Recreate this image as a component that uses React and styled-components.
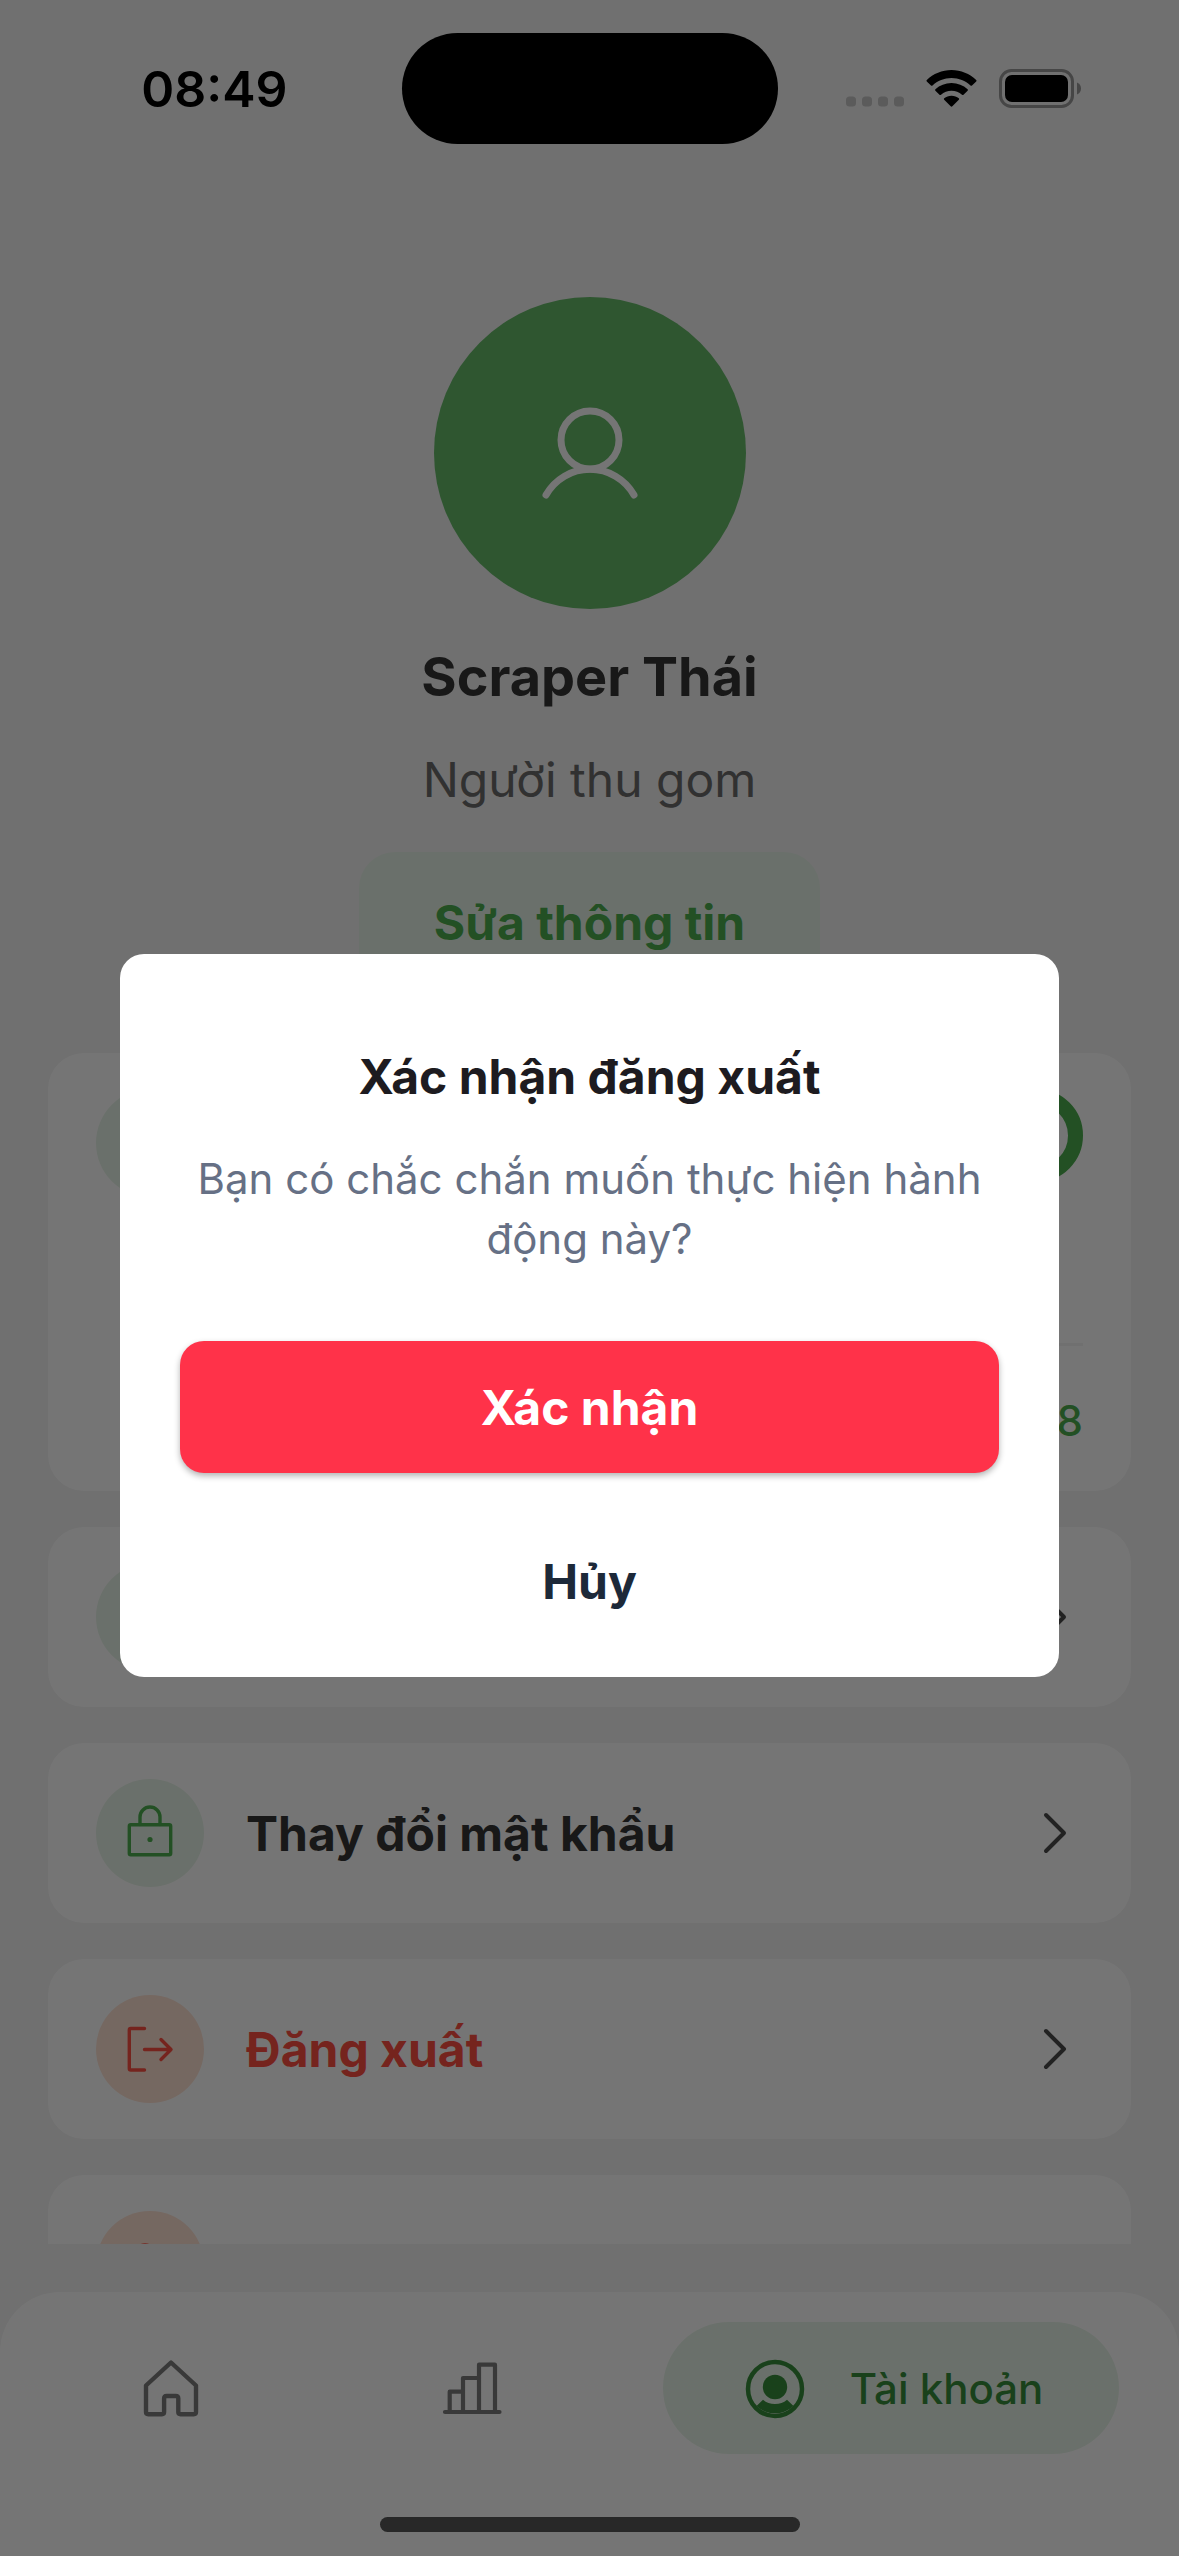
import React from "react";
import styled, { createGlobalStyle } from "styled-components";

const GlobalStyle = createGlobalStyle`
  *, *::before, *::after { box-sizing: border-box; }
  body {
    margin: 0;
    background: #f4f4f4;
    font-family: Inter, "Noto Sans", sans-serif;
    font-optical-sizing: none;
    font-variation-settings: "opsz" 14;
  }
  h1, h2, p { margin: 0; }
  button { font: inherit; font-variation-settings: inherit; border: 0; padding: 0; background: none; cursor: pointer; }
  a { color: inherit; text-decoration: none; }
  svg { display: block; flex: none; }
`;

const Screen = styled.div`
  position: relative;
  display: flex;
  flex-direction: column;
  height: 100vh;
  overflow: hidden;
  background: #f4f4f4;
`;

const StatusBar = styled.header`
  display: grid;
  grid-template-columns: 1fr 376px 1fr;
  align-items: center;
  flex: none;
  height: 177px;
`;

const Clock = styled.time`
  justify-self: end;
  padding-right: 114px;
  font-size: 50px;
  font-weight: 600;
  line-height: 60px;
  color: #000;
`;

const Island = styled.div`
  height: 111px;
  border-radius: 56px;
  background: #000;
`;

const StatusIcons = styled.div`
  display: flex;
  justify-content: flex-end;
  align-items: center;
  gap: 22px;
  padding-right: 98px;
`;

const Content = styled.main`
  display: flex;
  flex-direction: column;
  flex: 1;
  min-height: 0;
  overflow: hidden;
  padding: 120px 48px 0;
`;

const Profile = styled.section`
  display: flex;
  flex-direction: column;
  align-items: center;
  gap: 42px;
  flex: none;
  margin-bottom: 60px;
`;

const Identity = styled.div`
  display: flex;
  flex-direction: column;
  align-items: center;
  gap: 36px;
`;

const Avatar = styled.div`
  display: grid;
  place-items: center;
  width: 312px;
  height: 312px;
  border-radius: 50%;
  background: #66bb6a;
`;

const Name = styled.h1`
  font-size: 54px;
  font-weight: 700;
  line-height: 63px;
  color: #363636;
`;

const Role = styled.p`
  font-size: 48px;
  line-height: 60px;
  color: #6b6b6b;
`;

const EditButton = styled.button`
  height: 141px;
  padding: 0 75px;
  border-radius: 36px;
  background: #e8f5e9;
  color: #4caf50;
  font-size: 48px;
  font-weight: 700;
`;

const Cards = styled.div`
  display: flex;
  flex-direction: column;
  gap: 36px;
  flex: none;
`;

const Card = styled.section`
  display: flex;
  flex-direction: column;
  height: 438px;
  padding: 36px 48px 0;
  border-radius: 36px;
  background: #fff;
`;

const CardTop = styled.div`
  display: flex;
  justify-content: space-between;
  align-items: flex-start;
  flex: 1;
`;

const CardFooter = styled.div`
  display: flex;
  justify-content: flex-end;
  align-items: center;
  height: 148px;
  margin-left: 150px;
  padding-top: 3px;
  border-top: 3px solid #f4f4f4;
  color: #4caf50;
  font-size: 42px;
  font-weight: 500;
`;

const Ring = styled.div`
  width: 93px;
  height: 93px;
  border: 15px solid #4caf50;
  border-radius: 50%;
`;

const Row = styled.button`
  display: flex;
  align-items: center;
  gap: 42px;
  width: 100%;
  height: 180px;
  padding: 0 48px;
  border-radius: 36px;
  background: #fff;
  text-align: left;
`;

const Bubble = styled.span`
  display: grid;
  place-items: center;
  flex: none;
  width: 108px;
  height: 108px;
  border-radius: 50%;
  background: ${(p) => (p.$danger ? "#ffe2d3" : "#e8f5e9")};
  color: ${(p) => (p.$danger ? "#ff4f42" : "#4caf50")};
`;

const RowLabel = styled.span`
  flex: 1;
  font-size: 48px;
  font-weight: 700;
  color: ${(p) => (p.$danger ? "#ff4f42" : "#363636")};
`;

const NavBar = styled.nav`
  display: flex;
  flex-direction: column;
  align-items: center;
  justify-content: space-between;
  flex: none;
  height: 264px;
  margin-top: 48px;
  padding: 30px 60px 24px;
  border-radius: 60px 60px 0 0;
  background: #fff;
`;

const Tabs = styled.div`
  display: flex;
  justify-content: space-between;
  width: 100%;
`;

const Tab = styled.a`
  display: flex;
  align-items: center;
  justify-content: center;
  gap: 39px;
  width: ${(p) => (p.$active ? "456px" : "222px")};
  height: 132px;
  border-radius: 66px;
  background: ${(p) => (p.$active ? "#e8f5e9" : "transparent")};
  && { color: ${(p) => (p.$active ? "#388e3c" : "#7d7d7d")}; }
  font-size: 42px;
  font-weight: 500;
`;

const HomeIndicator = styled.div`
  width: 420px;
  height: 15px;
  border-radius: 8px;
  background: #575757;
`;

const Overlay = styled.div`
  position: absolute;
  inset: 0;
  display: flex;
  align-items: center;
  justify-content: center;
  padding: 177px 120px 102px;
  background: rgba(0, 0, 0, 0.54);
`;

const Dialog = styled.div`
  display: flex;
  flex-direction: column;
  width: 100%;
  padding: 87px 60px 30px;
  border-radius: 24px;
  background: #fff;
  text-align: center;
`;

const DialogTitle = styled.h2`
  margin-bottom: 36px;
  font-size: 48px;
  font-weight: 700;
  line-height: 72px;
  color: #1d1b20;
`;

const DialogText = styled.p`
  margin-bottom: 72px;
  font-size: 42px;
  line-height: 60px;
  color: #667085;
`;

const Actions = styled.div`
  display: flex;
  flex-direction: column;
  gap: 42px;
`;

const ActionButton = styled.button`
  height: 132px;
  border-radius: 24px;
  font-size: 48px;
  font-weight: 700;
  background: ${(p) => (p.$primary ? "#ff3249" : "transparent")};
  color: ${(p) => (p.$primary ? "#fff" : "#1d2939")};
  box-shadow: ${(p) => (p.$primary ? "0 3px 6px rgba(0, 0, 0, 0.3)" : "none")};
`;

const stroke = {
  fill: "none",
  stroke: "currentColor",
  strokeLinecap: "round",
  strokeLinejoin: "round",
};

const SignalDots = () => (
  <svg width="58" height="38" viewBox="0 0 58 38" fill="#c6c6c6">
    {[0, 16, 32, 48].map((x) => (
      <rect key={x} x={x} y="26.5" width="10" height="10" rx="3.5" />
    ))}
  </svg>
);

const WifiIcon = () => (
  <svg width="51" height="38" viewBox="0 0 51 38" fill="#000">
    <path d="M25.500 0C34.800 0 43.800 3.700 50.200 10C50.700 10.500 50.700 11 50.200 11.500L46 15.500C45.500 16 45 15.900 44.500 15.500C39.500 10.800 32.800 8 25.500 8C18.200 8 11.500 10.800 6.500 15.500C6 15.900 5.500 16 5 15.500L0.800 11.500C0.300 11 0.300 10.500 0.800 10C7.200 3.700 16.200 0 25.500 0Z" />
    <path d="M25.500 13C31.700 13 37.200 15.300 41.600 19.200C42.100 19.700 42.100 20.200 41.600 20.700L37.500 24.700C37 25.200 36.500 25.100 36 24.700C33.100 22.200 29.500 20.700 25.500 20.700C21.500 20.700 17.900 22.200 15 24.700C14.500 25.100 14 25.200 13.500 24.700L9.400 20.700C8.900 20.200 8.900 19.700 9.400 19.200C13.800 15.300 19.300 13 25.500 13Z" />
    <path d="M25.500 25.700C28.300 25.700 30.800 26.700 32.800 28.300C33.300 28.800 33.300 29.300 32.800 29.800L26.300 36.300C25.800 36.800 25.200 36.800 24.700 36.300L18.200 29.800C17.700 29.300 17.700 28.800 18.200 28.300C20.200 26.700 22.700 25.700 25.500 25.700Z" />
  </svg>
);

const BatteryIcon = () => (
  <svg width="82" height="40" viewBox="0 0 82 40">
    <rect x="1.500" y="1.500" width="72" height="36" rx="11" fill="none" stroke="#989898" strokeWidth="3" />
    <rect x="6" y="6" width="63" height="27" rx="7" fill="#000" />
    <path d="M78 13.500c2.500 1 4 3.200 4 6s-1.500 5-4 6z" fill="#989898" />
  </svg>
);

const PersonIcon = () => (
  <svg width="108" height="108" viewBox="0 0 108 108" {...stroke} stroke="#fff" strokeWidth="7">
    <circle cx="54" cy="41" r="29" />
    <path d="M10 96A50.500 50.500 0 0 1 98 96" />
  </svg>
);

const LockIcon = () => (
  <svg width="60" height="60" viewBox="0 0 60 60" {...stroke} strokeWidth="3.400">
    <rect x="9.300" y="21.700" width="41.400" height="30" rx="1.500" />
    <path d="M20 21.500V14a10 10 0 0 1 20 0v7.500" />
    <circle cx="30" cy="36.500" r="2.600" fill="currentColor" stroke="none" />
  </svg>
);

const LogoutIcon = () => (
  <svg width="60" height="60" viewBox="0 0 60 60" {...stroke} strokeWidth="3.400">
    <path d="M24.500 9.500H10.800a1.500 1.500 0 0 0-1.500 1.500V49.500a1.500 1.500 0 0 0 1.500 1.500H24.500" />
    <path d="M24.500 30.500H51M41 20.500L51 30.500L41 40.500" />
  </svg>
);

const RemoveUserIcon = () => (
  <svg width="60" height="60" viewBox="0 0 60 60" {...stroke} strokeWidth="3.400">
    <circle cx="25" cy="21" r="11" />
    <path d="M6 50a20 20 0 0 1 38 0M42 24h12" />
  </svg>
);

const ChevronIcon = () => (
  <svg width="54" height="54" viewBox="0 0 54 54" {...stroke} stroke="#4b4b4b" strokeWidth="4">
    <path d="M17 9L35 27L17 45" />
  </svg>
);

const HomeIcon = () => (
  <svg width="72" height="72" viewBox="0 0 72 72" {...stroke} strokeWidth="4.400">
    <path d="M36 10.500L61 33.500V60Q61 62.200 58.800 62.200H45.500Q43.300 62.200 43.300 60V46.500Q43.300 44 40.800 44H31.600Q29.100 44 29.100 46.500V60Q29.100 62.200 26.900 62.200H13.200Q11 62.200 11 60V33.500Z" />
  </svg>
);

const ChartIcon = () => (
  <svg width="72" height="72" viewBox="0 0 72 72" {...stroke} strokeWidth="4.200">
    <path d="M8 60H62.500M12.700 60V39.700H26M26 60V26H42M42 60V12.700H58V60" />
  </svg>
);

const AccountIcon = () => (
  <svg width="72" height="72" viewBox="0 0 72 72" fill="currentColor">
    <circle cx="36" cy="37" r="27" fill="none" stroke="currentColor" strokeWidth="4.500" />
    <circle cx="36" cy="35" r="12.200" />
    <path d="M17.500 54L24 47.700Q29 52 36 52Q43 52 48 47.700L54.500 54A27 27 0 0 1 17.500 54Z" />
  </svg>
);

function MenuRow({ icon, label, danger }) {
  return (
    <Row type="button">
      <Bubble $danger={danger}>{icon}</Bubble>
      <RowLabel $danger={danger}>{label}</RowLabel>
      <ChevronIcon />
    </Row>
  );
}

export default function App() {
  return (
    <>
      <GlobalStyle />
      <Screen>
        <StatusBar>
          <Clock>08:49</Clock>
          <Island />
          <StatusIcons>
            <SignalDots />
            <WifiIcon />
            <BatteryIcon />
          </StatusIcons>
        </StatusBar>

        <Content>
          <Profile>
            <Identity>
              <Avatar>
                <PersonIcon />
              </Avatar>
              <Name>Scraper Thái</Name>
            </Identity>
            <Role>Người thu gom</Role>
            <EditButton type="button">Sửa thông tin</EditButton>
          </Profile>

          <Cards>
            <Card>
              <CardTop>
                <Bubble />
                <Ring />
              </CardTop>
              <CardFooter>8</CardFooter>
            </Card>
            <MenuRow />
            <MenuRow icon={<LockIcon />} label="Thay đổi mật khẩu" />
            <MenuRow icon={<LogoutIcon />} label="Đăng xuất" danger />
            <MenuRow icon={<RemoveUserIcon />} danger />
          </Cards>
        </Content>

        <NavBar>
          <Tabs>
            <Tab href="#home" aria-label="Home">
              <HomeIcon />
            </Tab>
            <Tab href="#stats" aria-label="Stats">
              <ChartIcon />
            </Tab>
            <Tab href="#account" $active>
              <AccountIcon />
              Tài khoản
            </Tab>
          </Tabs>
          <HomeIndicator />
        </NavBar>

        <Overlay>
          <Dialog role="dialog" aria-modal="true" aria-labelledby="dialog-title">
            <DialogTitle id="dialog-title">Xác nhận đăng xuất</DialogTitle>
            <DialogText>Bạn có chắc chắn muốn thực hiện hành động này?</DialogText>
            <Actions>
              <ActionButton type="button" $primary>
                Xác nhận
              </ActionButton>
              <ActionButton type="button">Hủy</ActionButton>
            </Actions>
          </Dialog>
        </Overlay>
      </Screen>
    </>
  );
}
